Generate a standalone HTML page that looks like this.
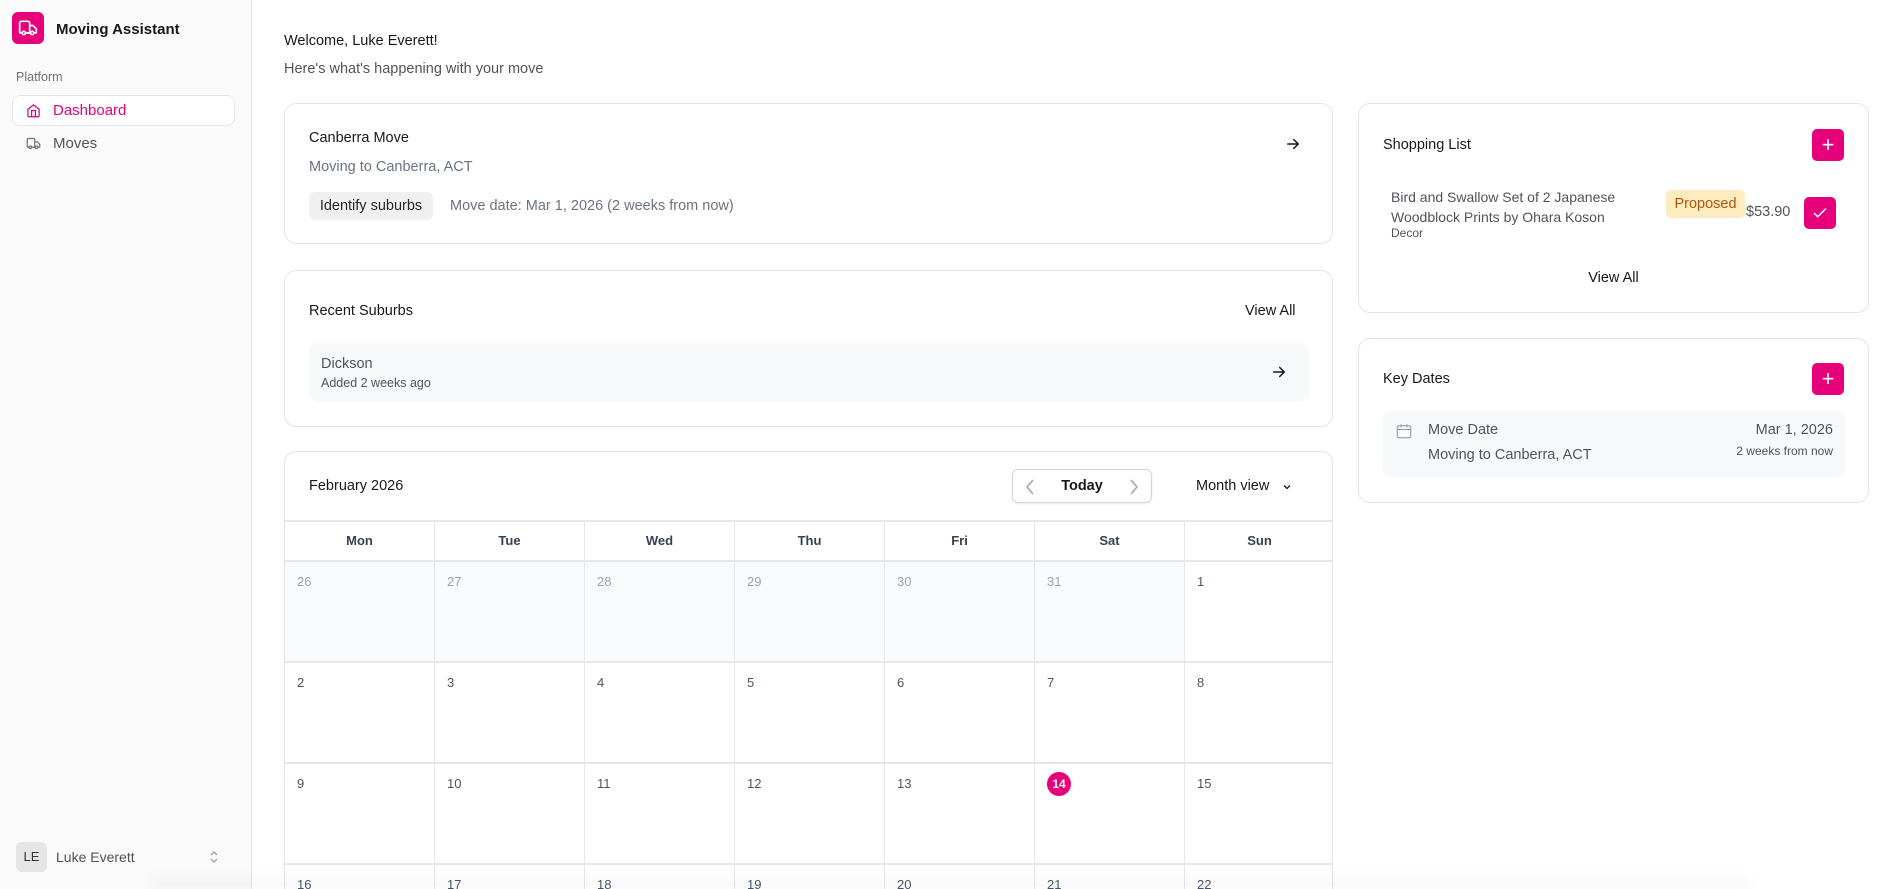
<!DOCTYPE html>
<html><head><meta charset="utf-8"><style>
*{box-sizing:border-box;margin:0;padding:0}
html,body{width:1897px;height:889px;overflow:hidden}
body{font-family:"Liberation Sans",sans-serif;background:#fff;color:#18181b;position:relative;font-size:15px}
.abs{position:absolute}
.side{left:0;top:0;width:252px;height:889px;background:#fafafa;border-right:1px solid #e5e5e5}
.card{position:absolute;border:1px solid #e4e4e7;border-radius:12px;background:#fff}
.pink{background:#e6007a;border-radius:5px;color:#fff;display:flex;align-items:center;justify-content:center}
.muted{color:#6b7280}
.cal{left:284px;top:451px;width:1049px;height:438px;overflow:hidden;border-bottom:none;border-bottom-left-radius:0;border-bottom-right-radius:0}
.grid{position:absolute;left:0;top:68px;width:1049px}
.hrow{display:flex;height:42px;border-top:2px solid #e5e7eb;border-bottom:2px solid #e5e7eb}
.hrow div{flex:1;text-align:center;line-height:38px;font-size:13px;font-weight:bold;color:#374151;border-left:1px solid #e5e7eb}
.hrow div:first-child{border-left:none}
.row{display:flex;height:101px;border-bottom:2px solid #e5e7eb}
.row div{flex:1;border-left:1px solid #e5e7eb;padding:12px 12px;font-size:13px;color:#4b5563}
.row div:first-child{border-left:none}
.row.prev div{background:#f9fafb;color:#9ca3af}
.row.prev div:last-child{background:#fff;color:#4b5563}
</style></head><body>
<div class="abs side">
  <div class="abs pink" style="left:12px;top:12px;width:32px;height:32px;border-radius:6px">
    <svg width="20" height="20" viewBox="0 0 24 24" fill="none" stroke="#fff" stroke-width="2" stroke-linecap="round" stroke-linejoin="round"><path d="M14 18V6a2 2 0 0 0-2-2H4a2 2 0 0 0-2 2v11a1 1 0 0 0 1 1h2"/><path d="M15 18H9"/><path d="M19 18h2a1 1 0 0 0 1-1v-3.65a1 1 0 0 0-.22-.62L18.3 9.38a1 1 0 0 0-.78-.38H14"/><circle cx="17" cy="18" r="2"/><circle cx="7" cy="18" r="2"/></svg>
  </div>
  <div class="abs" style="left:56px;top:21px;font-size:15px;font-weight:bold">Moving Assistant</div>
  <div class="abs" style="left:16px;top:70px;font-size:12.5px;color:#71717a">Platform</div>
  <div class="abs" style="left:12px;top:95px;width:223px;height:31px;background:#fff;border:1px solid #e4e4e7;border-radius:8px"></div>
  <svg class="abs" style="left:26px;top:103px" width="15" height="15" viewBox="0 0 24 24" fill="none" stroke="#e6007a" stroke-width="2" stroke-linecap="round" stroke-linejoin="round"><path d="M3 10l9-7 9 7v10a2 2 0 0 1-2 2H5a2 2 0 0 1-2-2z"/><path d="M9 22V12h6v10"/></svg>
  <div class="abs" style="left:53px;top:102px;color:#e6007a;font-size:15px">Dashboard</div>
  <svg class="abs" style="left:26px;top:136px" width="15" height="15" viewBox="0 0 24 24" fill="none" stroke="#71717a" stroke-width="2" stroke-linecap="round" stroke-linejoin="round"><path d="M14 18V6a2 2 0 0 0-2-2H4a2 2 0 0 0-2 2v11a1 1 0 0 0 1 1h2"/><path d="M15 18H9"/><path d="M19 18h2a1 1 0 0 0 1-1v-3.65L18.3 9.38H14"/><circle cx="17" cy="18" r="2"/><circle cx="7" cy="18" r="2"/></svg>
  <div class="abs" style="left:53px;top:135px;color:#52525b;font-size:15px">Moves</div>
  <div class="abs" style="left:16px;top:842px;width:31px;height:30px;background:#e5e5e5;border-radius:6px;font-size:13px;line-height:30px;text-align:center;color:#333">LE</div>
  <div class="abs" style="left:56px;top:849px;color:#52525b;font-size:14px">Luke Everett</div>
  <svg class="abs" style="left:208px;top:849px" width="12" height="16" viewBox="0 0 12 16" fill="none" stroke="#9ca3af" stroke-width="1.4"><path d="M3 6l3-3 3 3M3 10l3 3 3-3"/></svg>
</div>

<div class="abs" style="left:284px;top:33px;font-size:14.5px">Welcome, Luke Everett!</div>
<div class="abs muted" style="left:284px;top:61px;font-size:14.5px;color:#52525b">Here's what's happening with your move</div>

<div class="card" style="left:284px;top:103px;width:1049px;height:141px">
  <div class="abs" style="left:24px;top:26px;font-size:14.5px">Canberra Move</div>
  <div class="abs" style="left:24px;top:55px;font-size:14.5px;color:#6b7280">Moving to Canberra, ACT</div>
  <div class="abs" style="left:24px;top:88px;width:124px;height:28px;background:#f0f0f1;border-radius:6px;font-size:14.5px;line-height:28px;text-align:center;color:#27272a">Identify suburbs</div>
  <div class="abs" style="left:165px;top:94px;font-size:14.5px;color:#6b7280">Move date: Mar 1, 2026 (2 weeks from now)</div>
  <svg class="abs" style="left:999px;top:31px" width="18" height="18" viewBox="0 0 24 24" fill="none" stroke="#18181b" stroke-width="2" stroke-linecap="round"><path d="M5 12h14M13 6l6 6-6 6"/></svg>
</div>

<div class="card" style="left:284px;top:270px;width:1049px;height:157px">
  <div class="abs" style="left:24px;top:32px;font-size:14.5px">Recent Suburbs</div>
  <div class="abs" style="left:960px;top:32px;font-size:14.5px">View All</div>
  <div class="abs" style="left:24px;top:72px;width:1000px;height:59px;background:#f8f9fa;border-radius:8px">
    <div class="abs" style="left:12px;top:13px;font-size:14.5px;color:#52525b">Dickson</div>
    <div class="abs" style="left:12px;top:33px;font-size:12.5px;color:#52525b">Added 2 weeks ago</div>
    <svg class="abs" style="left:961px;top:20px" width="18" height="18" viewBox="0 0 24 24" fill="none" stroke="#18181b" stroke-width="2" stroke-linecap="round"><path d="M5 12h14M13 6l6 6-6 6"/></svg>
  </div>
</div>

<div class="card cal">
  <div class="abs" style="left:24px;top:26px;font-size:14.5px">February 2026</div>
  <div class="abs" style="left:727px;top:17px;width:140px;height:34px;border:1px solid #d4d4d8;border-radius:6px;box-shadow:0 1px 2px rgba(0,0,0,.08)">
    <svg class="abs" style="left:10px;top:8px" width="14" height="18" viewBox="0 0 14 18" fill="none" stroke="#9ca3af" stroke-width="1.5"><path d="M10 2L4 9l6 7"/></svg>
    <div class="abs" style="left:0;width:138px;top:8px;text-align:center;font-size:14.5px;font-weight:bold">Today</div>
    <svg class="abs" style="left:114px;top:8px" width="14" height="18" viewBox="0 0 14 18" fill="none" stroke="#9ca3af" stroke-width="1.5"><path d="M4 2l6 7-6 7"/></svg>
  </div>
  <div class="abs" style="left:911px;top:26px;font-size:14.5px">Month view</div>
  <svg class="abs" style="left:996px;top:29px" width="12" height="12" viewBox="0 0 24 24" fill="none" stroke="#18181b" stroke-width="2.5"><path d="M6 9l6 6 6-6"/></svg>
  <div class="grid">
    <div class="hrow"><div>Mon</div><div>Tue</div><div>Wed</div><div>Thu</div><div>Fri</div><div>Sat</div><div>Sun</div></div>
    <div class="row prev"><div>26</div><div>27</div><div>28</div><div>29</div><div>30</div><div>31</div><div>1</div></div>
    <div class="row"><div>2</div><div>3</div><div>4</div><div>5</div><div>6</div><div>7</div><div>8</div></div>
    <div class="row"><div>9</div><div>10</div><div>11</div><div>12</div><div>13</div><div style="padding:8px 12px"><span style="display:inline-block;width:24px;height:24px;border-radius:12px;background:#e6007a;color:#fff;text-align:center;line-height:24px;font-weight:bold;font-size:12px">14</span></div><div>15</div></div>
    <div class="row"><div>16</div><div>17</div><div>18</div><div>19</div><div>20</div><div>21</div><div>22</div></div>
  </div>
</div>

<div class="card" style="left:1358px;top:103px;width:511px;height:210px">
  <div class="abs" style="left:24px;top:33px;font-size:14.5px">Shopping List</div>
  <div class="abs pink" style="left:453px;top:25px;width:32px;height:32px;font-size:22px">+</div>
  <div class="abs" style="left:32px;top:83px;font-size:14px;color:#52525b;line-height:20px">Bird and Swallow Set of 2 Japanese<br>Woodblock Prints by Ohara Koson</div>
  <div class="abs" style="left:32px;top:122px;font-size:12px;color:#52525b">Decor</div>
  <div class="abs" style="left:307px;top:86px;width:79px;height:28px;background:#fdecc0;border-radius:5px;color:#b45309;font-size:14.5px;line-height:28px;text-align:center">Proposed</div>
  <div class="abs" style="left:387px;top:100px;font-size:14.5px;color:#52525b">$53.90</div>
  <div class="abs pink" style="left:445px;top:93px;width:32px;height:32px">
    <svg width="18" height="18" viewBox="0 0 24 24" fill="none" stroke="#fff" stroke-width="2"><path d="M4 12l5 5L20 6"/></svg>
  </div>
  <div class="abs" style="left:0;width:509px;top:166px;text-align:center;font-size:14.5px">View All</div>
</div>

<div class="card" style="left:1358px;top:338px;width:511px;height:165px">
  <div class="abs" style="left:24px;top:32px;font-size:14.5px">Key Dates</div>
  <div class="abs pink" style="left:453px;top:24px;width:32px;height:32px;font-size:22px">+</div>
  <div class="abs" style="left:24px;top:71px;width:462px;height:68px;background:#f8f9fa;border-radius:8px">
    <svg class="abs" style="left:12px;top:12px" width="18" height="18" viewBox="0 0 24 24" fill="none" stroke="#9ca3af" stroke-width="1.6"><rect x="3" y="5" width="18" height="16" rx="2"/><path d="M3 10h18M8 3v4M16 3v4"/></svg>
    <div class="abs" style="left:45px;top:12px;font-size:14.5px;color:#52525b">Move Date</div>
    <div class="abs" style="left:45px;top:37px;font-size:14.5px;color:#52525b">Moving to Canberra, ACT</div>
    <div class="abs" style="right:12px;top:12px;font-size:14.5px;color:#52525b">Mar 1, 2026</div>
    <div class="abs" style="right:12px;top:34px;font-size:12px;color:#52525b">2 weeks from now</div>
  </div>
</div>
<div class="abs" style="left:150px;top:872px;width:1600px;height:17px;background:linear-gradient(rgba(0,0,0,0),rgba(0,0,0,0.04));filter:blur(6px)"></div>
</body></html>
